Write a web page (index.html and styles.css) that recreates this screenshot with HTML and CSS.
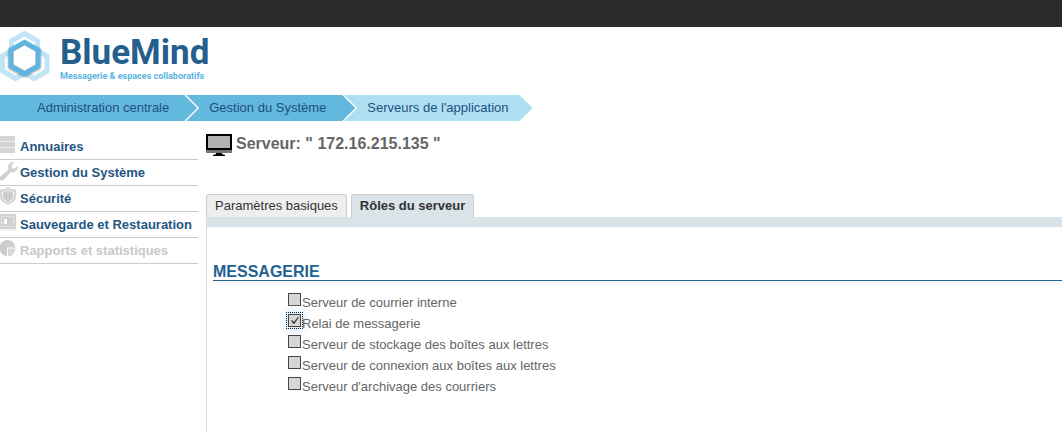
FILE: index.html
```html
<!DOCTYPE html>
<html lang="fr">
<head>
<meta charset="utf-8">
<title>BlueMind</title>
<link rel="stylesheet" href="styles.css">
</head>
<body>
<div class="topbar"></div>
<header class="brand">
  <svg class="brand-mark" width="50" height="52" viewBox="0 0 50 52" aria-hidden="true">
    <g fill="none" stroke="#bfe5f7" stroke-width="5">
      <path d="M24.500 2.500 37.500 10v15L24.500 32.500 11.500 25V10z"/>
      <path d="M15.500 17.500 28.500 25v15L15.500 47.500 2.500 40V25z"/>
      <path d="M34 17.500 47 25v15L34 47.500 21 40V25z"/>
    </g>
    <path class="mark-core" d="M24.500 11.500 38 19v16L24.500 42.500 11 35V19z" fill="#fff" stroke="#5cb5e3" stroke-width="5"/>
    <path d="M24.500 14 35.800 20.300v13.400L24.500 40 13.200 33.700V20.300z" fill="#fff" stroke="#7fa5bb" stroke-width=".8"/>
  </svg>
  <div class="brand-text">
    <span class="brand-name">BlueMind</span>
    <span class="brand-tag">Messagerie &amp; espaces collaboratifs</span>
  </div>
</header>
<nav class="crumbs">
  <a href="#" class="crumb first">Administration centrale</a>
  <a href="#" class="crumb">Gestion du Système</a>
  <a href="#" class="crumb last">Serveurs de l'application</a>
</nav>
<div class="layout">
  <nav class="side">
    <a href="#" class="side-link">
      <svg width="18" height="20" viewBox="0 0 18 20" aria-hidden="true"><path d="M0 1h15v17H0z" fill="#d5d5d5"/><path d="M0 6.500h15M0 12.500h15" stroke="#eee"/></svg>
      Annuaires</a>
    <a href="#" class="side-link">
      <svg width="18" height="20" viewBox="0 0 18 20" aria-hidden="true"><path d="M0 16 8.500 8.500C7 4 10 .500 14.500 1.200L11.500 4l.500 3 3 .500 2.800-2.800C18.500 9 15 12 11 11L3.500 19Q1 20 0 18.500z" fill="#d0d0d0"/></svg>
      Gestion du Système</a>
    <a href="#" class="side-link">
      <svg width="18" height="20" viewBox="0 0 18 20" aria-hidden="true"><path d="M0 2.500Q5 3 8 0q3 3 8 2.500v8Q15 15 8 18 1 15 0 10.500z" fill="#d5d5d5"/><path d="M2.500 5Q6 5 8 3q2 2 5.500 2v5.500Q13 13.500 8 15.500 3 13.500 2.500 10.500z" fill="#ccc" stroke="#f2f2f2"/></svg>
      Sécurité</a>
    <a href="#" class="side-link">
      <svg width="18" height="20" viewBox="0 0 18 20" aria-hidden="true"><path d="M0 1h16v15H0z" fill="#d2d2d2"/><path d="M1.500 3.500h12v10h-12z" fill="#d0d0d0" stroke="#e2e2e2"/><path d="M4 6h3v5H4z" fill="#fff"/><path d="M0 16h16v2H0z" fill="#f3f3f3"/></svg>
      Sauvegarde et Restauration</a>
    <a href="#" class="side-link off">
      <svg width="18" height="20" viewBox="0 0 18 20" aria-hidden="true"><path d="M7 17A8 8 0 1 1 15.500 8.500H7z" fill="#ccc"/><path d="M8 9.500h7.500A8 8 0 0 1 8 17.500z" fill="#d8d8d8"/></svg>
      Rapports et statistiques</a>
  </nav>
  <main class="main">
    <h1 class="title">
      <svg width="26" height="22" viewBox="0 0 26 22" aria-hidden="true"><path d="M0 0h26v16H0z" fill="#000"/><path d="M2 2h22v12H2z" fill="#b2b2b2"/><path d="M0 16h26v3H0z" fill="#777"/><path d="M10 19h6v1l3 1v1H7v-1l3-1z" fill="#000"/></svg>
      Serveur: " 172.16.215.135 "</h1>
    <div class="tabs" role="tablist">
      <button type="button" class="tab" role="tab">Paramètres basiques</button>
      <button type="button" class="tab active" role="tab" aria-selected="true">Rôles du serveur</button>
    </div>
    <section class="panel">
      <h2 class="section">MESSAGERIE</h2>
      <div class="roles">
        <label class="role"><input type="checkbox" class="box">Serveur de courrier interne</label>
        <label class="role"><input type="checkbox" class="box focused" checked>Relai de messagerie</label>
        <label class="role"><input type="checkbox" class="box">Serveur de stockage des boîtes aux lettres</label>
        <label class="role"><input type="checkbox" class="box">Serveur de connexion aux boîtes aux lettres</label>
        <label class="role"><input type="checkbox" class="box">Serveur d'archivage des courriers</label>
      </div>
    </section>
  </main>
</div>
</body>
</html>
```
FILE: styles.css
```css
* { box-sizing: border-box; }
body {
  margin: 0;
  min-height: 100vh;
  display: flex;
  flex-direction: column;
  background: #fff;
  color: #666;
  font: 13px/20px "Liberation Sans", Arial, sans-serif;
}
a { text-decoration: none; }
.topbar { height: 27px; background: #2b2b2b; }
.brand { display: flex; gap: 10px; height: 68px; padding-top: 4px; }
.mark-core { filter: drop-shadow(0 1px 1px #0006); }
.brand-text {
  display: flex;
  flex-direction: column;
  padding-top: 4px;
  font-family: Roboto, "Liberation Sans", sans-serif;
  font-weight: bold;
  white-space: nowrap;
}
.brand-name { font-size: 35px; line-height: 36px; color: #255f8e; }
.brand-tag { font-size: 9px; line-height: 11px; color: #5bb5e0; }

.crumbs { display: flex; height: 26px; }
.crumb {
  margin-left: -11px;
  padding: 0 29px 0 23px;
  line-height: 26px;
  white-space: nowrap;
  color: #1f4f80;
  background: #63b8de;
  clip-path: polygon(0 0, calc(100% - 13px) 0, 100% 50%, calc(100% - 13px) 100%, 0 100%, 13px 50%);
}
.crumb.first {
  margin-left: 0;
  padding: 0 28px 0 37px;
  clip-path: polygon(0 0, calc(100% - 13px) 0, 100% 50%, calc(100% - 13px) 100%, 0 100%);
}
.crumb.last { padding-right: 24px; background: #aedff3; }

.layout { flex: 1; display: flex; gap: 8px; }
.side { flex: none; width: 198px; padding-top: 13px; }
.side-link {
  display: flex;
  gap: 2px;
  height: 26px;
  padding-top: 1px;
  border-bottom: 1px solid #ccc;
  line-height: 24px;
  font-weight: bold;
  white-space: nowrap;
  color: #1f5682;
}
.side-link.off { color: #c8c8c8; }

.main { flex: 1; min-width: 0; display: flex; flex-direction: column; padding-top: 13px; }
.title { display: flex; gap: 4px; margin: 0; height: 60px; font-size: 16px; line-height: 20px; color: #666; }
.tabs { display: flex; gap: 4px; }
.tab {
  height: 23px;
  padding: 0 8px;
  border: 1px solid #ccc;
  border-bottom: 0;
  border-radius: 3px 3px 0 0;
  background: #eee;
  color: #333;
  font: 13px/20px "Liberation Sans", Arial, sans-serif;
  white-space: nowrap;
}
.tab.active { background: #d9e3e8; font-weight: bold; }
.panel { flex: 1; border-top: 10px solid #d9e3e8; border-left: 1px solid #d0dde4; padding: 35px 0 0 6px; }
.section { margin: 0; padding-top: 2px; font-size: 16px; line-height: 16px; color: #22628f; border-bottom: 1px solid #22628f; }
.roles { display: flex; flex-direction: column; align-items: flex-start; padding: 11px 0 0 75px; }
.role { display: flex; gap: 1px; line-height: 21px; }
.box {
  appearance: none;
  flex: none;
  width: 13px;
  height: 13px;
  margin: 1px 0 0;
  border: 1px solid #444;
  background: #d6d6d6;
}
.box.focused { outline: 1px dotted #123; outline-offset: 1px; box-shadow: 0 0 8px 3px #d4e8fb; }
.box:checked::before {
  content: "";
  display: block;
  width: 8px;
  height: 7px;
  margin: 2px;
  background: #333;
  clip-path: polygon(0 50%, 15% 45%, 35% 70%, 88% 0, 100% 5%, 40% 100%, 30% 100%);
}
```
